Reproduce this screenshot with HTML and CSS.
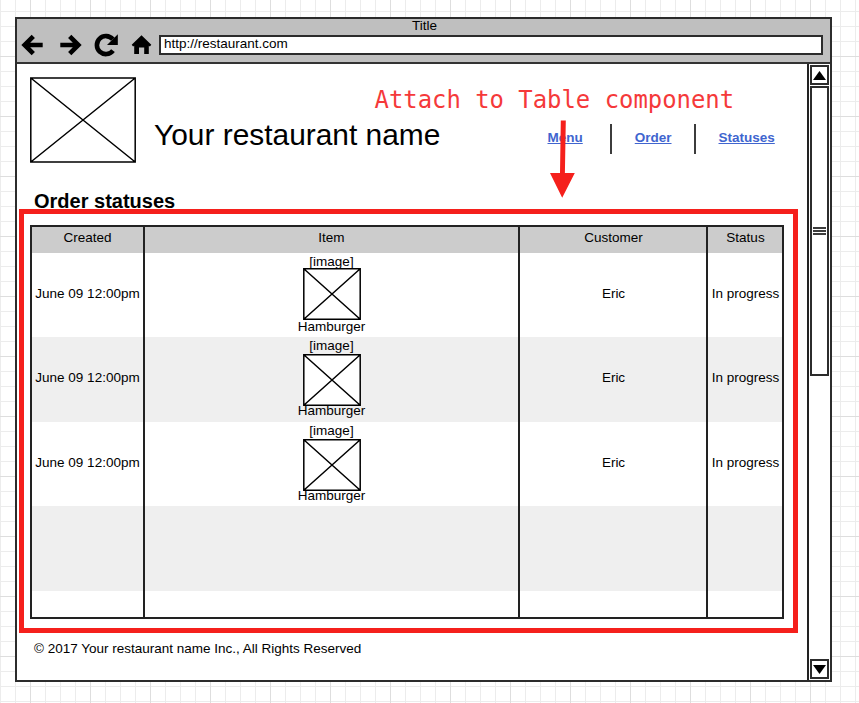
FILE: index.html
```html
<!DOCTYPE html>
<html lang="en">
<head>
<meta charset="utf-8">
<title>Order statuses</title>
<link rel="stylesheet" href="styles.css">
</head>
<body>
<div class="window">
  <header class="chrome">
    <div class="chrome-title">Title</div>
    <div class="toolbar">
      <svg class="icons" width="142" height="26" viewBox="17 32 142 26">
        <g fill="none" stroke="#000" stroke-width="4.6">
          <path d="M42.7 45H25M33.3 36.3L24.6 45l8.7 8.7"/>
          <path d="M60.3 45H78M69.7 36.3l8.7 8.7-8.7 8.7"/>
          <path d="M112.8 39.3A9 9 0 1 0 113 50.6"/>
        </g>
        <path d="M117.8 34.3V45H107z"/>
        <path d="M141.5 35.3l9.8 9.4-1.4 1.8-1.1-.8V54h-4.6v-6.5h-5.2V54h-4.8v-8.3l-1.1.8-1.4-1.8z"/>
      </svg>
      <div class="address">http://restaurant.com</div>
    </div>
  </header>
  <div class="body">
    <main class="page">
      <div class="masthead">
        <svg class="logo" width="106" height="86" viewBox="0 0 106 86"><path d="M.8 1H105.2V85H.8zM.8 1L105.2 85M105.2 1L.8 85"/></svg>
        <h1>Your restaurant name</h1>
        <nav>
          <a href="#">Menu</a><i></i><a href="#">Order</a><i></i><a href="#">Statuses</a>
        </nav>
      </div>
      <h2>Order statuses</h2>
      <div class="highlight">
        <div class="table">
          <div class="row head"><span>Created</span><span>Item</span><span>Customer</span><span>Status</span></div>
          <div class="row first"><span>June 09 12:00pm</span>
            <span class="item">[image]<svg width="58" height="52" viewBox="0 0 58 52"><path d="M.8 .8H57.2V51.2H.8zM.8 .8L57.2 51.2M57.2 .8L.8 51.2"/></svg><b>Hamburger</b></span>
            <span>Eric</span><span>In progress</span></div>
          <div class="row second alt"><span>June 09 12:00pm</span>
            <span class="item">[image]<svg width="58" height="52" viewBox="0 0 58 52"><path d="M.8 .8H57.2V51.2H.8zM.8 .8L57.2 51.2M57.2 .8L.8 51.2"/></svg><b>Hamburger</b></span>
            <span>Eric</span><span>In progress</span></div>
          <div class="row third"><span>June 09 12:00pm</span>
            <span class="item">[image]<svg width="58" height="52" viewBox="0 0 58 52"><path d="M.8 .8H57.2V51.2H.8zM.8 .8L57.2 51.2M57.2 .8L.8 51.2"/></svg><b>Hamburger</b></span>
            <span>Eric</span><span>In progress</span></div>
          <div class="row alt"><span></span><span></span><span></span><span></span></div>
          <div class="row last"><span></span><span></span><span></span><span></span></div>
        </div>
      </div>
      <footer>© 2017 Your restaurant name Inc., All Rights Reserved</footer>
    </main>
    <aside class="scrollbar">
      <div class="step"><svg width="13" height="9" viewBox="0 0 13 9"><path d="M6.5 0L13 9H0z"/></svg></div>
      <div class="thumb"><i></i><i></i><i></i></div>
      <div class="step down"><svg width="13" height="9" viewBox="0 0 13 9"><path d="M0 0H13L6.5 9z"/></svg></div>
    </aside>
  </div>
</div>
<div class="note">Attach to Table component</div>
<svg class="arrow" width="26" height="79" viewBox="550 120 26 79"><path d="M560.8 120.5h5l-.9 52.5h9.9L562.2 197.7 550 173h10z"/></svg>
</body>
</html>
```
FILE: styles.css
```css
* { box-sizing: border-box; }

body {
  margin: 0;
  width: 859px;
  height: 703px;
  overflow: hidden;
  padding: 17px 0 0 15px;
  font: 13.5px/16px "Liberation Sans", Arial, sans-serif;
  color: #000;
  background:
    repeating-linear-gradient(90deg, transparent 0 30px, #dedede 30px 31px, transparent 31px 60px),
    repeating-linear-gradient(180deg, transparent 0 56px, #dedede 56px 57px, transparent 57px 60px),
    repeating-linear-gradient(90deg, #ececec 0 1px, transparent 1px 15px),
    repeating-linear-gradient(180deg, transparent 0 11px, #ececec 11px 12px, transparent 12px 15px),
    #fff;
}

svg { display: block; flex: none; }

.window {
  display: flex;
  flex-direction: column;
  width: 817px;
  height: 665px;
  border: 2px solid #2c2c2c;
  background: #fff;
}

.chrome {
  height: 45px;
  background: #bfbfbf;
  border-bottom: 2px solid #333;
}

.chrome-title { height: 13px; padding-left: 2px; line-height: 13px; text-align: center; }

.toolbar { display: flex; align-items: center; height: 26px; }

.address {
  flex: none;
  width: 664px;
  height: 20px;
  padding-left: 3px;
  border: 2px solid #2c2c2c;
  background: #fff;
  line-height: 14px;
}

.body { display: flex; flex: 1; min-height: 0; }

.page { width: 790px; padding-top: 13px; }

.masthead { display: flex; height: 86px; margin-left: 13px; }

.logo, .item svg { fill: #fff; stroke: #000; stroke-width: 1.5; }

h1 {
  width: 393.5px;
  margin: 41px 0 0 18px;
  font-size: 29.9px;
  line-height: 34px;
  font-weight: 400;
  white-space: nowrap;
}

nav { display: flex; height: 30px; margin-top: 47px; line-height: 27px; font-weight: 700; }
nav a { color: #4065cf; text-decoration: underline; }
nav i { width: 2px; margin: 0 23px 0 27px; background: #3c3c3c; }
nav a + i ~ i { margin-left: 22px; }

h2 {
  height: 23px;
  margin: 27px 0 0 17px;
  font-size: 20px;
  line-height: 23px;
}

.highlight {
  width: 779px;
  height: 424px;
  margin: -4px 0 0 2px;
  border: 5px solid #f5201c;
  padding: 11px 0 0 6px;
}

.table {
  width: 754px;
  height: 394px;
  border: 2px solid #222;
}

.row {
  display: grid;
  grid-template-columns: 113px 375px 188px 1fr;
  height: 84.5px;
}
.row > span {
  display: flex;
  align-items: center;
  justify-content: center;
  padding: 0 0 2.2px 1px;
  border-right: 2px solid #222;
  white-space: nowrap;
}
.row > span:first-child { padding-left: 0; }
.row > span:last-child { border-right: 0; padding-left: 1px; }
.row.head > span:nth-child(2) { padding-left: 0; }
.row.alt { background: #efefef; }
.row.head { height: 25.6px; background: #ccc; }
.row.head > span { padding-bottom: 4.6px; }
.row.last { height: 26.4px; }

.row > .item { flex-direction: column; justify-content: flex-start; padding: 1px 0 0; }
.item svg { margin: -1.6px 0 -1.2px 1px; }
.item b { font-weight: 400; position: relative; }
.second .item svg { margin: -.6px 0 -2.8px 1px; }
.third .item svg { margin: .4px 0 -3.2px 1px; }

footer { margin: 8px 0 0 17px; }

.scrollbar {
  display: flex;
  flex-direction: column;
  width: 23px;
  padding: 1px 0 1px 1px;
  border-left: 2px solid #222;
}

.step {
  display: flex;
  align-items: center;
  justify-content: center;
  width: 19px;
  height: 20px;
  border: 2px solid #2c2c2c;
}

.thumb {
  display: flex;
  flex-direction: column;
  align-items: center;
  justify-content: center;
  gap: 1px;
  width: 19px;
  height: 290px;
  margin-top: 1px;
  border: 2px solid #2c2c2c;
}
.thumb i { width: 13px; height: 2px; background: #3c3c3c; }

.down { margin-top: auto; }

.note {
  position: absolute;
  left: 374.5px;
  top: 87px;
  font: 23.9px/27px "DejaVu Sans Mono", monospace;
  color: #f5393a;
  white-space: nowrap;
}

.arrow { position: absolute; left: 550px; top: 120px; fill: #f5201c; }
```
